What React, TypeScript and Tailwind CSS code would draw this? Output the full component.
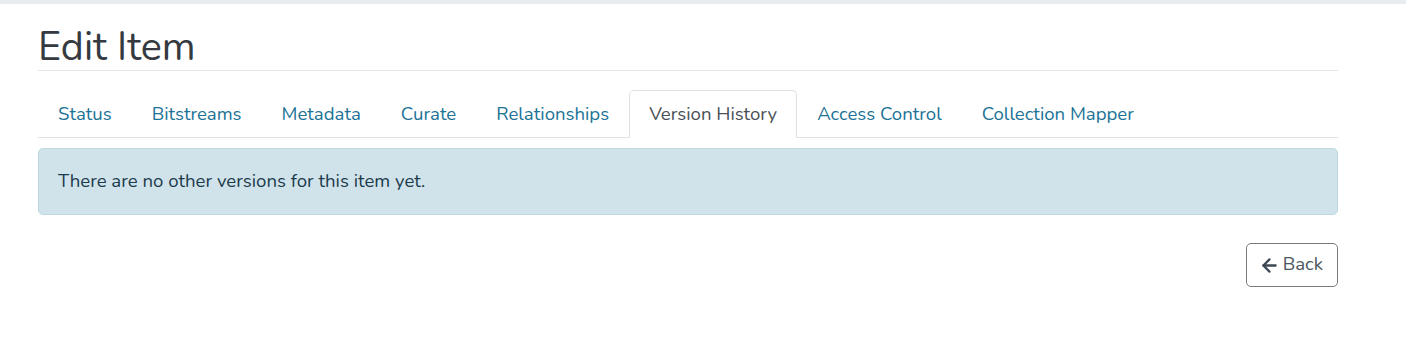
import { ArrowLeft } from "lucide-react"

const tabs = [
  "Status",
  "Bitstreams",
  "Metadata",
  "Curate",
  "Relationships",
  "Version History",
  "Access Control",
  "Collection Mapper",
]

export default function App() {
  return (
    <div className="min-h-[358px] bg-white font-['Nunito','Lato','Noto_Sans',sans-serif]">
      <div className="h-[4px] bg-[#e9ecef]" />
      <div className="w-[1300px] ml-[38px]">
        <h1 className="pt-[24px] pb-[4px] text-[39.5px] leading-[38px] font-normal text-[#343a40]">
          Edit Item
        </h1>
        <div className="h-px bg-[#e6e6e6]" />
        <ul className="mt-[19px] flex border-b border-[#dee2e6] h-[48px]">
          {tabs.map((t) => {
            const active = t === "Version History"
            return (
              <li key={t} className="-mb-px">
                <a
                  className={
                    active
                      ? "flex h-[48px] items-center pt-[2px] px-[19px] text-[18.6px] text-[#495057] bg-white border border-[#dee2e6] border-b-white rounded-t-[5px]"
                      : "flex h-[48px] items-center pt-[2px] px-[19px] text-[18.6px] text-[#207396] border border-transparent"
                  }
                >
                  {t}
                </a>
              </li>
            )
          })}
        </ul>
        <div className="mt-[10px] h-[67px] flex items-center px-[19px] rounded-[5px] bg-[#d1e3ea] border border-[#bfd9e2] text-[18.6px] text-[#1b3b4d]">
          There are no other versions for this item yet.
        </div>
        <div className="mt-[28px] flex justify-end">
          <button className="flex items-center gap-[3px] h-[44px] pl-[12px] pr-[14px] rounded-[5px] border border-[#7a7a7a] text-[18.6px] text-[#4a5660]">
            <ArrowLeft size={21} strokeWidth={2.6} className="text-[#3d4852]" />
            Back
          </button>
        </div>
      </div>
    </div>
  )
}
